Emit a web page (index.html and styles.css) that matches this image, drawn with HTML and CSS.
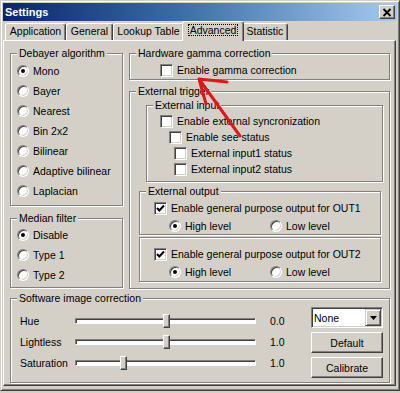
FILE: index.html
```html
<!DOCTYPE html>
<html lang="en">
<head>
  <meta charset="UTF-8" />
  <title>Settings</title>
  <link rel="stylesheet" href="styles.css">
</head>
<body>
  <div class="window">
    <div class="titlebar">
      <span class="title">Settings</span>
      <span class="close">
        <svg width="10" height="9" viewBox="0 0 10 9"><path d="M1.5 1L8.5 8M8.5 1L1.5 8" stroke="#000" stroke-width="1.8"/></svg>
      </span>
    </div>

    <div class="tabs">
      <span class="tab w-app">Application</span>
      <span class="tab w-gen">General</span>
      <span class="tab w-lut">Lookup Table</span>
      <span class="tab w-adv active"><span class="focus">Advanced</span></span>
      <span class="tab w-stat">Statistic</span>
    </div>

    <div class="panel">
      <div class="col">
        <div class="group debayer">
          <span class="group-title">Debayer algorithm</span>
          <div class="opt"><span class="radio on"></span>Mono</div>
          <div class="opt"><span class="radio"></span>Bayer</div>
          <div class="opt"><span class="radio"></span>Nearest</div>
          <div class="opt"><span class="radio"></span>Bin 2x2</div>
          <div class="opt"><span class="radio"></span>Bilinear</div>
          <div class="opt"><span class="radio"></span>Adaptive bilinear</div>
          <div class="opt"><span class="radio"></span>Laplacian</div>
        </div>
        <div class="group median">
          <span class="group-title">Median filter</span>
          <div class="opt"><span class="radio on"></span>Disable</div>
          <div class="opt"><span class="radio"></span>Type 1</div>
          <div class="opt"><span class="radio"></span>Type 2</div>
        </div>
      </div>

      <div class="col">
        <div class="group gamma">
          <span class="group-title">Hardware gamma correction</span>
          <div class="row"><span class="check"></span>Enable gamma correction</div>
        </div>
        <div class="group trigger">
          <span class="group-title">External trigger</span>
          <div class="group ext-in">
            <span class="group-title">External input</span>
            <div class="row lvl1"><span class="check"></span>Enable external syncronization</div>
            <div class="row lvl2"><span class="check"></span>Enable see status</div>
            <div class="row lvl3"><span class="check"></span>External input1 status</div>
            <div class="row lvl3"><span class="check"></span>External input2 status</div>
          </div>
          <div class="group ext-out">
            <span class="group-title">External output</span>
            <div class="row out-check"><span class="check on"><svg width="9" height="9" viewBox="0 0 9 9"><path d="M1 4L3.3 6.5L8 1.5" fill="none" stroke="#000" stroke-width="2"/></svg></span>Enable general purpose output for OUT1</div>
            <div class="row out-level">
              <span class="level"><span class="radio on"></span>High level</span>
              <span class="level"><span class="radio"></span>Low level</span>
            </div>
          </div>
          <div class="group ext-out second">
            <div class="row out-check"><span class="check on"><svg width="9" height="9" viewBox="0 0 9 9"><path d="M1 4L3.3 6.5L8 1.5" fill="none" stroke="#000" stroke-width="2"/></svg></span>Enable general purpose output for OUT2</div>
            <div class="row out-level">
              <span class="level"><span class="radio on"></span>High level</span>
              <span class="level"><span class="radio"></span>Low level</span>
            </div>
          </div>
        </div>
      </div>

      <div class="group software">
        <span class="group-title">Software image correction</span>
        <div class="sliders">
          <span>Hue</span>
          <span class="slider"><span class="thumb" style="left: 87px"></span></span>
          <span class="value">0.0</span>
          <span>Lightless</span>
          <span class="slider"><span class="thumb" style="left: 87px"></span></span>
          <span class="value">1.0</span>
          <span>Saturation</span>
          <span class="slider"><span class="thumb" style="left: 44px"></span></span>
          <span class="value">1.0</span>
        </div>
        <div class="side">
          <div class="combo">
            <span>None</span>
            <span class="combo-btn"><svg width="7" height="4" viewBox="0 0 7 4"><path d="M0 0H7L3.5 4Z" fill="#000"/></svg></span>
          </div>
          <div class="btn">Default</div>
          <div class="btn">Calibrate</div>
        </div>
      </div>
    </div>

    <svg class="arrow" width="60" height="75" viewBox="0 0 60 75">
      <path d="M9 9L50 66M9 9L37 12M9 9L16 34" fill="none" stroke="#e0161c" stroke-width="3" stroke-linecap="round"/>
    </svg>
  </div>
</body>
</html>
```

FILE: styles.css
```css
body {
  margin: 0;
  background: #d4d0c8;
  font-family: 'Liberation Sans', Arial, sans-serif;
  font-size: 10.5px;
  color: #000;
}
.window {
  position: relative;
  width: 400px;
  height: 391px;
  box-sizing: border-box;
  padding: 2px;
  border: 1px solid;
  border-color: #d4d0c8 #404040 #404040 #d4d0c8;
  box-shadow: inset 1px 1px #fff, inset -1px -1px #808080;
}
.titlebar {
  display: flex;
  align-items: center;
  height: 18px;
  padding: 0 2px;
  background: linear-gradient(to right, #0a246a, #3a6ea5 45%, #a6caf0);
}
.title {
  color: #fff;
  font-weight: bold;
  font-size: 11px;
}
.close {
  margin-left: auto;
  width: 16px;
  height: 14px;
  box-sizing: border-box;
  display: flex;
  align-items: center;
  justify-content: center;
  background: #d4d0c8;
  border: 1px solid;
  border-color: #fff #404040 #404040 #fff;
  box-shadow: inset -1px -1px #808080;
}
.tabs {
  display: flex;
  align-items: flex-end;
  height: 19px;
  padding-left: 2px;
}
.tab {
  height: 17px;
  box-sizing: border-box;
  border: 1px solid;
  border-bottom: 0;
  border-color: #fff #404040 #fff #fff;
  border-radius: 3px 3px 0 0;
  box-shadow: inset -1px 0 #808080;
  text-align: center;
  line-height: 15px;
}
.w-app { width: 61px; }
.w-gen { width: 47px; }
.w-lut { width: 71px; }
.w-adv { width: 58px; }
.w-stat { width: 46px; }
.tab.active {
  position: relative;
  z-index: 1;
  height: 20px;
  width: 62px;
  margin: 0 -2px -1px;
  background: #d4d0c8;
  line-height: 17px;
}
.focus {
  padding: 0 2px;
  outline: 1px dotted #000;
  outline-offset: -1px;
}
.panel {
  height: 346px;
  box-sizing: border-box;
  border: 1px solid;
  border-color: #fff #404040 #404040 #fff;
  box-shadow: inset -1px -1px #808080;
  width: 393px;
  padding: 12px 0 0 6px;
  display: grid;
  grid-template-columns: 113px 261px;
  grid-template-rows: 236px 85px;
  column-gap: 6px;
  row-gap: 9px;
  align-content: start;
}
.col {
  display: flex;
  flex-direction: column;
}
.group {
  position: relative;
  box-sizing: border-box;
  border: 1px solid #808080;
  box-shadow: inset 1px 1px #fff, 1px 1px #fff;
}
.group-title {
  position: absolute;
  top: -7px;
  left: 6px;
  padding: 0 2px;
  line-height: 13px;
  background: #d4d0c8;
  white-space: nowrap;
}
.opt, .row, .level {
  display: flex;
  align-items: center;
  white-space: nowrap;
}
.opt { height: 20px; }
.row { height: 16px; }
.radio {
  position: relative;
  flex: none;
  width: 12px;
  height: 12px;
  box-sizing: border-box;
  margin-right: 4px;
  border-radius: 50%;
  background: #fff;
  border: 1px solid;
  border-color: #808080 #fff #fff #808080;
  box-shadow: inset 1px 1px #404040, inset -1px -1px #d4d0c8;
}
.radio.on::after {
  content: "";
  position: absolute;
  left: 3px;
  top: 3px;
  width: 4px;
  height: 4px;
  border-radius: 50%;
  background: #000;
}
.check {
  flex: none;
  display: flex;
  align-items: center;
  justify-content: center;
  width: 13px;
  height: 13px;
  box-sizing: border-box;
  margin-right: 4px;
  background: #fff;
  border: 1px solid;
  border-color: #808080 #fff #fff #808080;
  box-shadow: inset 1px 1px #404040, inset -1px -1px #d4d0c8;
}
.debayer {
  height: 153px;
  padding: 7px 0 0 6px;
}
.median {
  height: 70px;
  margin-top: 12px;
  padding: 6px 0 0 6px;
}
.gamma {
  height: 27px;
  padding: 8px 0 0 30px;
}
.trigger {
  height: 198px;
  margin-top: 11px;
  padding-top: 13px;
}
.ext-in {
  width: 237px;
  height: 77px;
  margin-left: 16px;
  padding-top: 7px;
}
.lvl1 { padding-left: 13px; }
.lvl2 { padding-left: 22px; }
.lvl3 { padding-left: 27px; }
.ext-out {
  width: 242px;
  height: 44px;
  margin: 9px 0 0 9px;
  padding-top: 8px;
}
.ext-out.second {
  height: 45px;
  margin-top: 2px;
}
.out-check { padding-left: 14px; }
.out-level {
  height: 14px;
  margin-top: 3px;
  padding-left: 29px;
}
.level:first-child { width: 101px; }
.software {
  grid-column: 1 / -1;
  display: flex;
  padding: 8px 0 0 9px;
}
.sliders {
  display: grid;
  grid-template-columns: 55px 181px auto;
  grid-auto-rows: 21px;
  align-items: center;
  margin-top: 3px;
}
.slider {
  position: relative;
  height: 6px;
  box-sizing: border-box;
  background: #fff;
  border: 1px solid;
  border-color: #808080 #fff #fff #808080;
  box-shadow: inset 1px 1px #404040;
}
.thumb {
  position: absolute;
  top: -5px;
  width: 7px;
  height: 14px;
  box-sizing: border-box;
  background: #d4d0c8;
  border: 1px solid;
  border-color: #fff #404040 #404040 #fff;
  box-shadow: inset -1px -1px #808080;
}
.value { padding-left: 14px; }
.side {
  margin: 0 6px 0 auto;
  width: 72px;
  display: flex;
  flex-direction: column;
  gap: 4px;
}
.combo, .btn {
  height: 21px;
  box-sizing: border-box;
}
.combo {
  display: flex;
  align-items: center;
  padding-left: 2px;
  background: #fff;
  border: 1px solid;
  border-color: #808080 #fff #fff #808080;
  box-shadow: inset 1px 1px #404040, inset -1px -1px #d4d0c8;
}
.combo-btn {
  margin: 0 1px 0 auto;
  width: 16px;
  height: 17px;
  box-sizing: border-box;
  display: flex;
  align-items: center;
  justify-content: center;
  background: #d4d0c8;
  border: 1px solid;
  border-color: #d4d0c8 #404040 #404040 #d4d0c8;
  box-shadow: inset 1px 1px #fff, inset -1px -1px #808080;
}
.btn {
  display: flex;
  align-items: center;
  justify-content: center;
  background: #d4d0c8;
  border: 1px solid;
  border-color: #fff #404040 #404040 #fff;
  box-shadow: inset -1px -1px #808080;
}
.arrow {
  position: absolute;
  left: 189px;
  top: 69px;
  z-index: 2;
}
```
